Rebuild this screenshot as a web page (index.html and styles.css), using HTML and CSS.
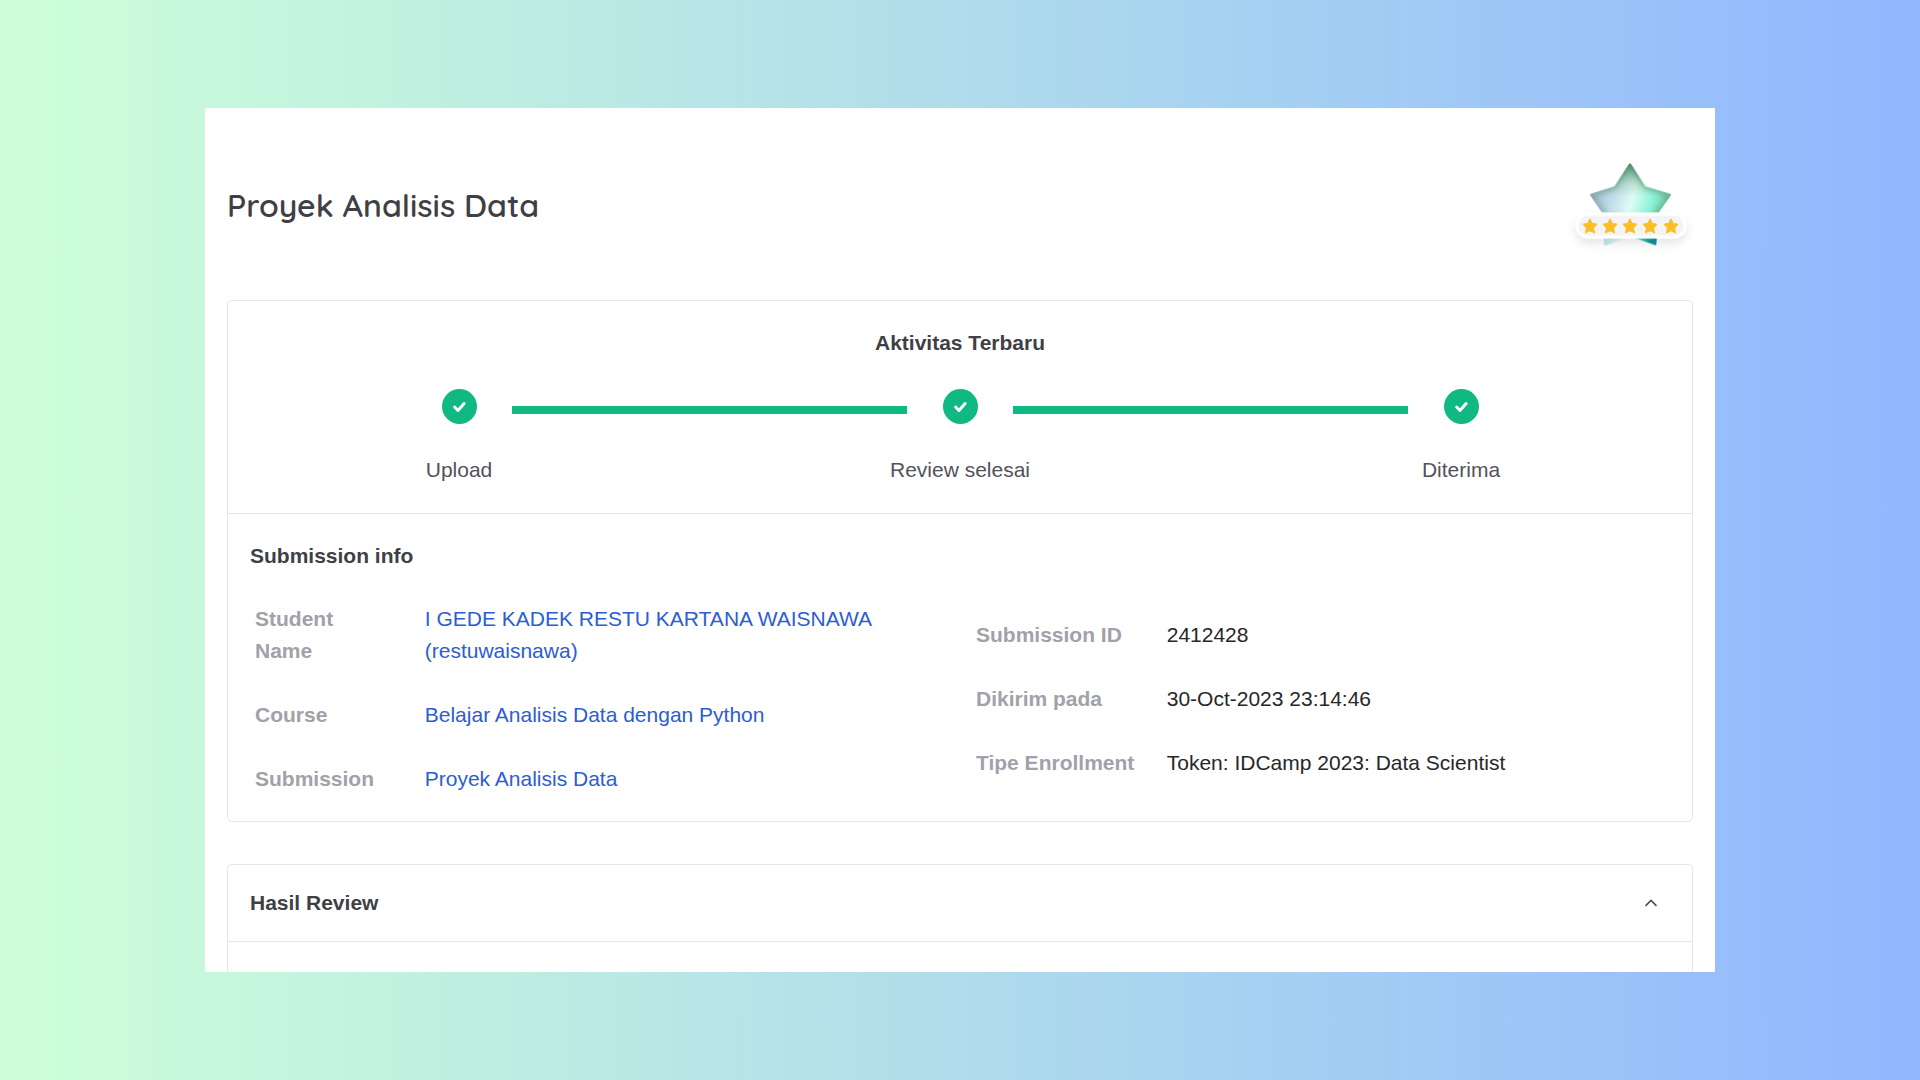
FILE: index.html
```html
<!DOCTYPE html>
<html lang="id">
<head>
<meta charset="utf-8">
<meta name="viewport" content="width=device-width, initial-scale=1">
<title>Proyek Analisis Data</title>
<link rel="stylesheet" href="styles.css">
</head>
<body>
<svg class="defs" width="0" height="0" aria-hidden="true">
  <symbol id="check" viewBox="0 0 36 36">
    <circle cx="18" cy="18" r="18" fill="#10b981"/>
    <path d="M13 18.600l3.400 3.500 6.400-7.200" fill="none" stroke="#fff" stroke-width="3" stroke-linecap="round" stroke-linejoin="round"/>
  </symbol>
</svg>
<main class="sheet">
  <header class="page-head">
    <h1 class="page-title">Proyek Analisis Data</h1>
    <svg class="badge" viewBox="0 0 126 100" role="img" aria-label="5 bintang">
      <defs>
        <linearGradient id="base" x1="0" y1=".35" x2="1" y2=".65">
          <stop offset="0" stop-color="#a9bfd6"/>
          <stop offset=".25" stop-color="#bddbe8"/>
          <stop offset=".5" stop-color="#e0fbf4"/>
          <stop offset=".72" stop-color="#8ff5dc"/>
          <stop offset="1" stop-color="#6fc79a"/>
        </linearGradient>
        <linearGradient id="peak" x1="0" y1="0" x2="0" y2="1">
          <stop offset="0" stop-color="#5c9a7c"/>
          <stop offset=".25" stop-color="#8fc4a8" stop-opacity=".4"/>
          <stop offset=".4" stop-color="#8fc4a8" stop-opacity="0"/>
        </linearGradient>
        <linearGradient id="foot" x1=".35" y1=".4" x2=".7" y2="1">
          <stop offset=".3" stop-color="#2fcfc8" stop-opacity="0"/>
          <stop offset=".85" stop-color="#128fa3"/>
        </linearGradient>
        <filter id="soft" x="-20%" y="-20%" width="140%" height="140%"><feGaussianBlur stdDeviation="3"/></filter>
        <filter id="drop" x="-20%" y="-60%" width="140%" height="260%"><feDropShadow dx="0" dy="5" stdDeviation="5" flood-color="#000" flood-opacity=".1"/></filter>
        <path id="big" d="M63 10L78 32.500L102.500 40L88.500 60L88 89L63 80L38.500 89L38 60L24.500 40L48 32.500Z"/>
        <clipPath id="cut"><path d="M63 8L78 31.500L104 39.500L89.500 60L89.500 90L63 81L37 90.500L37 60L23 39.500L48 31.500Z"/></clipPath>
        <path id="mini" d="M0-7.200L2.300-2.600L7-1.800L3.600 1.900L4.500 6.900L0 4.700L-4.500 6.900L-3.600 1.900L-7-1.800L-2.300-2.600Z" fill="#fbbf24" stroke="#fbbf24" stroke-linejoin="round"/>
      </defs>
      <g stroke-linejoin="round" stroke-width="3">
        <use href="#big" fill="url(#base)" stroke="url(#base)"/>
        <use href="#big" fill="url(#peak)" stroke="url(#peak)"/>
      </g>
      <path d="M50 60H95L89 91L63 81Z" fill="url(#foot)" clip-path="url(#cut)"/>
      <g clip-path="url(#cut)"><path d="M38 60L24 39.500L48 31.500L63 8L78 31.500L103 39.500L89 60" fill="none" stroke="#4f8060" stroke-width="3" stroke-opacity=".75" filter="url(#soft)"/></g>
      <rect x="10" y="59" width="108" height="23" rx="11" fill="#f4f4f4" stroke="#fff" stroke-width="3" filter="url(#drop)"/>
      <use href="#mini" x="23" y="71"/>
      <use href="#mini" x="43" y="71"/>
      <use href="#mini" x="63" y="71"/>
      <use href="#mini" x="83" y="71"/>
      <use href="#mini" x="104" y="71"/>
    </svg>
  </header>

  <section class="card">
    <div class="activity">
      <h2 class="heading heading-center">Aktivitas Terbaru</h2>
      <ol class="steps">
        <li class="step"><svg class="step-icon" aria-hidden="true"><use href="#check"/></svg><span class="step-label">Upload</span></li>
        <li class="step-bar" role="presentation"></li>
        <li class="step"><svg class="step-icon" aria-hidden="true"><use href="#check"/></svg><span class="step-label">Review selesai</span></li>
        <li class="step-bar" role="presentation"></li>
        <li class="step"><svg class="step-icon" aria-hidden="true"><use href="#check"/></svg><span class="step-label">Diterima</span></li>
      </ol>
    </div>
    <div class="info">
      <h2 class="heading">Submission info</h2>
      <div class="info-grid">
        <table class="facts">
          <tr><th scope="row">Student Name</th><td><a href="#">I GEDE KADEK RESTU KARTANA WAISNAWA (restuwaisnawa)</a></td></tr>
          <tr><th scope="row">Course</th><td><a href="#">Belajar Analisis Data dengan Python</a></td></tr>
          <tr><th scope="row">Submission</th><td><a href="#">Proyek Analisis Data</a></td></tr>
        </table>
        <table class="facts facts-wide">
          <tr><th scope="row">Submission ID</th><td>2412428</td></tr>
          <tr><th scope="row">Dikirim pada</th><td>30-Oct-2023 23:14:46</td></tr>
          <tr><th scope="row">Tipe Enrollment</th><td>Token: IDCamp 2023: Data Scientist</td></tr>
        </table>
      </div>
    </div>
  </section>

  <section class="card card-open">
    <h2 class="accordion">
      <button class="accordion-button" type="button" aria-expanded="true">
        Hasil Review
        <svg class="chevron" viewBox="0 0 14 8" aria-hidden="true"><path d="M1.500 6.800L7 1.500l5.500 5.300" fill="none" stroke="#52525b" stroke-width="1.700"/></svg>
      </button>
    </h2>
  </section>
</main>
</body>
</html>
```
FILE: styles.css
```css
* { box-sizing: border-box; }

body {
  margin: 0;
  min-height: 100vh;
  display: flex;
  padding: 108px 205px;
  background: linear-gradient(90deg, #ceffd8 0%, #bceae3 30%, #a8d3f0 62%, #92b6ff 100%);
  color: #27272a;
  font: 21px/32px "Liberation Sans", Arial, sans-serif;
}

h1, h2, ol { margin: 0; padding: 0; }

.defs { position: absolute; }

.sheet {
  flex: 1;
  display: flex;
  flex-direction: column;
  padding: 0 22px;
  background: #fff;
}

.page-head {
  display: flex;
  align-items: center;
  justify-content: space-between;
  height: 192px;
  padding-top: 2px;
}

.page-title {
  color: #3f4046;
  font: 600 32px/48px Quicksand, Lato, sans-serif;
}

.badge { width: 126px; height: 100px; overflow: visible; }

.card {
  border: 1px solid #e6e6e6;
  border-radius: 5px;
}

.heading {
  color: #3f3f46;
  font-size: 21px;
  line-height: 32px;
}

.heading-center { text-align: center; }

.activity {
  padding: 26px 0 27px;
  border-bottom: 1px solid #e6e6e6;
}

.steps {
  display: flex;
  padding: 30px 178px 0;
  list-style: none;
}

.step {
  display: flex;
  flex-direction: column;
  align-items: center;
  gap: 30px;
  width: 106px;
}

.step-icon { width: 35px; height: 35px; }

.step-label {
  color: #52525b;
  white-space: nowrap;
}

.step-bar {
  flex: 1;
  height: 8px;
  margin-top: 17px;
  background: #10b981;
}

.info { padding: 26px 22px 10px; }

.info-grid {
  display: grid;
  grid-template-columns: 1fr 1fr;
  align-items: center;
  gap: 22px;
  padding-top: 15px;
}

.facts {
  width: 100%;
  border-collapse: collapse;
  table-layout: fixed;
}

.facts th,
.facts td {
  padding: 16px 0;
  text-align: left;
  vertical-align: top;
}

.facts th {
  width: 25%;
  padding-left: 5px;
  padding-right: 40px;
  color: #a1a1aa;
}

.facts-wide th {
  width: 28%;
  padding-right: 20px;
}

.facts a {
  color: #2c5dd2;
  text-decoration: none;
}

.card-open {
  flex: 1;
  margin-top: 42px;
  border-bottom: 0;
  border-radius: 5px 5px 0 0;
}

.accordion { border-bottom: 1px solid #e6e6e6; }

.accordion-button {
  display: flex;
  align-items: center;
  justify-content: space-between;
  width: 100%;
  height: 76px;
  padding: 0 34px 0 22px;
  border: 0;
  background: none;
  color: #3f3f46;
  font: 700 21px/32px "Liberation Sans", Arial, sans-serif;
  cursor: pointer;
}

.chevron { width: 14px; height: 8px; }
```
